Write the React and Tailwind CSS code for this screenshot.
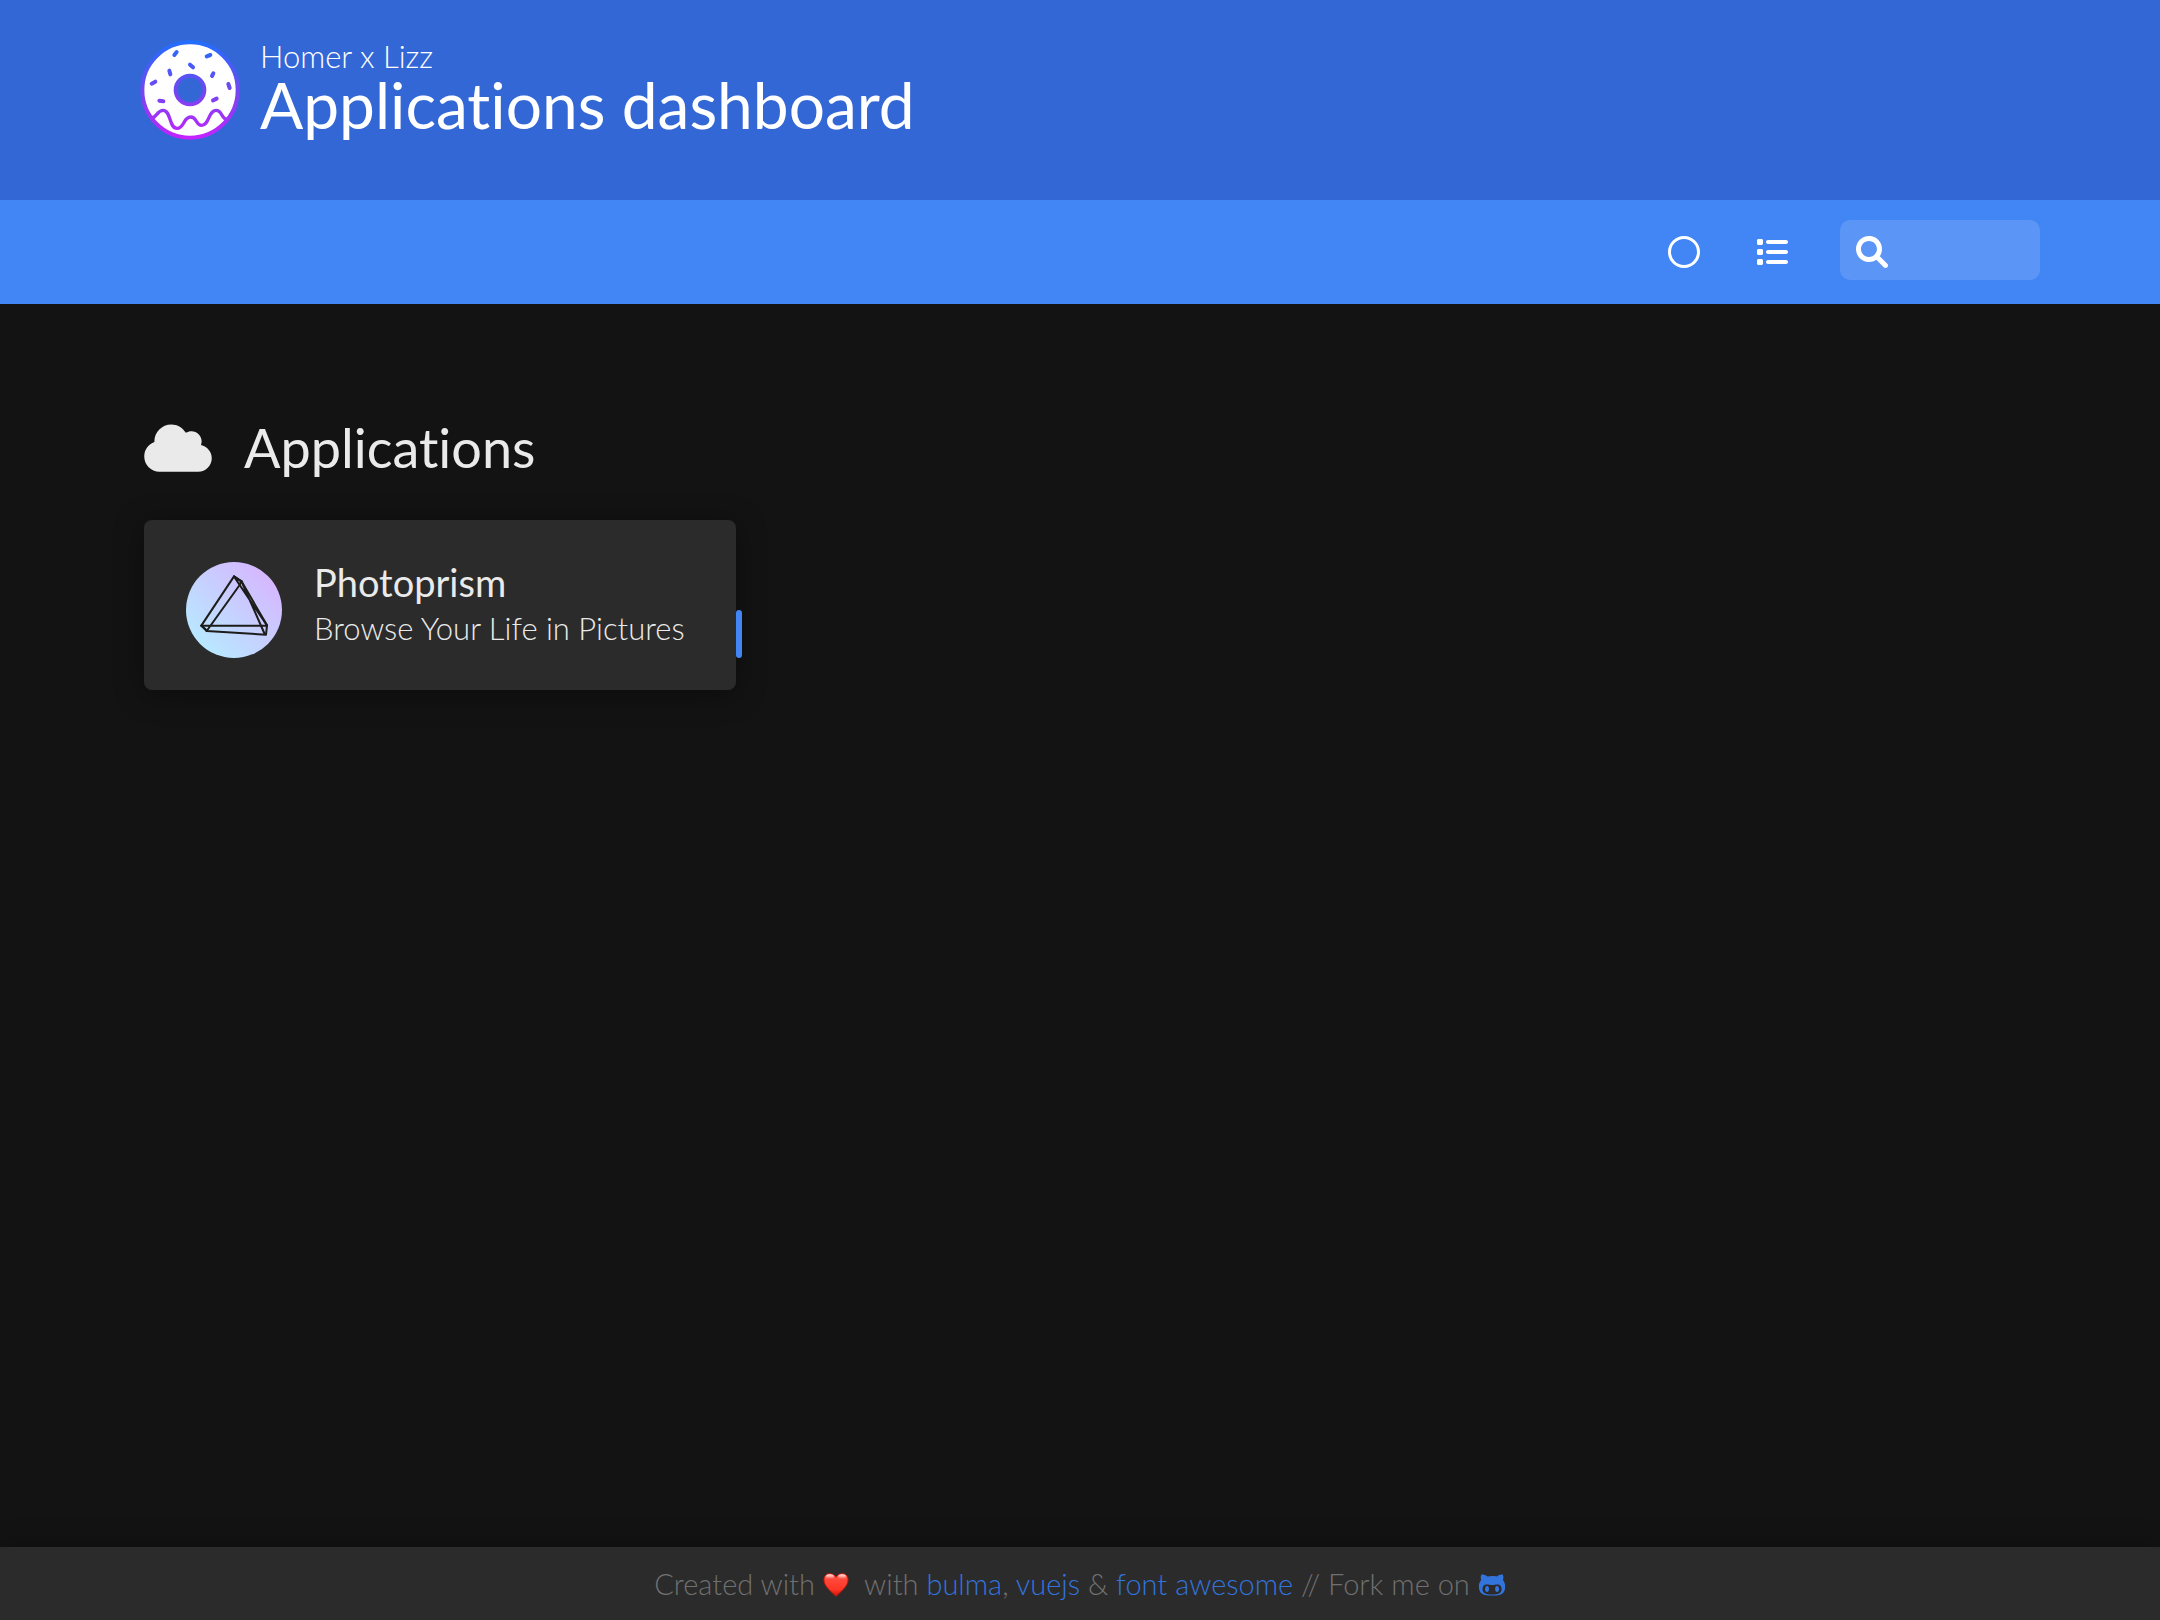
import { useState } from "react";
import { FaCloud, FaGithubAlt, FaList, FaRegCircle } from "react-icons/fa6";

const apps = [
  {
    name: "Photoprism",
    subtitle: "Browse Your Life in Pictures",
    url: "#photoprism",
  },
];

const Donut = () => (
  <svg viewBox="30 30 300 300" className="size-[100px] shrink-0" aria-hidden="true">
    <defs>
      <linearGradient id="donut" gradientUnits="userSpaceOnUse" x1="180" y1="30" x2="180" y2="330">
        <stop offset="0" stopColor="#1f6fff" />
        <stop offset="0.5" stopColor="#6f48f0" />
        <stop offset="1" stopColor="#c722ff" />
      </linearGradient>
    </defs>
    <path
      fill="#fff"
      fillRule="evenodd"
      d="M180 36a144 144 0 1 0 0 288a144 144 0 1 0 0-288zM180 138a42 42 0 1 1 0 84a42 42 0 1 1 0-84z"
    />
    <g fill="none" stroke="url(#donut)" strokeLinecap="round">
      <circle cx="180" cy="180" r="143" strokeWidth="12" />
      <circle cx="180" cy="180" r="43" strokeWidth="12" />
      <path
        strokeWidth="10"
        d="M66 264C80 262 82 241 99 241C124 241 116 295 141 295C164 295 159 261 182 261C202 261 196 286 215 286C238 286 235 241 258 241C278 241 273 268 292 268"
      />
      <path
        strokeWidth="12"
        d="M133 75l7-9M230 79l11-4M180 104l9 8M118 122l3 11M65 161l11-6M88 212l12 2M246 138l4-8M295 162l4 12M249 211l11-5"
      />
    </g>
  </svg>
);

const Prism = () => (
  <svg viewBox="48 51 288 288" className="size-24 shrink-0" aria-hidden="true">
    <defs>
      <linearGradient id="prism" gradientUnits="userSpaceOnUse" x1="90" y1="297" x2="290" y2="93">
        <stop offset="0" stopColor="#b8e8ff" />
        <stop offset="1" stopColor="#d5b8ff" />
      </linearGradient>
    </defs>
    <circle cx="192" cy="195" r="144" fill="url(#prism)" />
    <g fill="none" stroke="#1c1c1a" strokeWidth="6" strokeLinejoin="round" strokeLinecap="round">
      <path d="M192 94L94 242L110 258L288 269L291 241L214 108Z" />
      <path d="M94 242H291M192 94L209 120L110 258M209 120L214 108M192 94L214 110" />
      <path d="M209 120L291 241M214 108L284 267M94 242l16 14" />
    </g>
  </svg>
);

const SearchIcon = () => (
  <svg viewBox="0 0 512 512" fill="currentColor" className="size-8 shrink-0" aria-hidden="true">
    <path d="M500.3 443.7l-119.7-119.7c27.22-40.41 40.65-90.9 33.46-144.7C401.8 87.79 326.8 13.32 235.2 1.723C99.01-15.51-15.51 99.01 1.724 235.2c11.6 91.64 86.08 166.7 177.6 178.9c53.8 7.189 104.3-6.236 144.7-33.46l119.7 119.7c15.62 15.62 40.95 15.62 56.57 0C515.9 484.7 515.9 459.3 500.3 443.7zM79.1 208c0-70.58 57.42-128 128-128s128 57.42 128 128c0 70.58-57.42 128-128 128S79.1 278.6 79.1 208z" />
  </svg>
);

const Heart = () => (
  <svg viewBox="0 0 78 74" className="inline-block h-6 w-[26px] align-[-2px]" role="img" aria-label="love">
    <defs>
      <linearGradient id="heart" x1="0" y1="0" x2="0" y2="1">
        <stop offset="0" stopColor="#ff6a5c" />
        <stop offset="0.3" stopColor="#ff4638" />
        <stop offset="0.7" stopColor="#ff3626" />
        <stop offset="1" stopColor="#c81006" />
      </linearGradient>
      <linearGradient id="shine" x1="0" y1="0" x2="0" y2="1">
        <stop offset="0" stopColor="#fff" stopOpacity="0.85" />
        <stop offset="1" stopColor="#fff" stopOpacity="0" />
      </linearGradient>
    </defs>
    <path
      fill="url(#heart)"
      stroke="#d4180c"
      strokeWidth="3"
      d="M39 72C28 60 2 42 2 21C2 9 10 2 20 2C29 2 36 7 39 14C42 7 49 2 58 2C68 2 76 9 76 21C76 42 50 60 39 72Z"
    />
    <ellipse cx="20" cy="11" rx="12" ry="7" fill="url(#shine)" />
    <ellipse cx="58" cy="11" rx="12" ry="7" fill="url(#shine)" />
  </svg>
);

const App = () => {
  const [dark, setDark] = useState(true);
  const [list, setList] = useState(false);
  const [search, setSearch] = useState("");

  const visible = apps.filter((app) =>
    app.name.toLowerCase().includes(search.toLowerCase())
  );

  return (
    <div
      className={`flex min-h-screen flex-col font-['Lato',sans-serif] font-light [font-variant-ligatures:none] ${
        dark ? "bg-[#131313] text-[#eaeaea]" : "bg-[#f5f5f5] text-[#363636]"
      }`}
    >
      <header className="text-white">
        <div className="bg-[#3367d6] px-[140px] pt-10 pb-[60px]">
          <div className="flex h-[100px] items-start gap-5">
            <Donut />
            <div>
              <p className="text-[31px] leading-8">Homer x Lizz</p>
              <h1 className="text-[64px] leading-[66px] font-normal">
                Applications dashboard
              </h1>
            </div>
          </div>
        </div>
        <nav className="flex items-start justify-end bg-[#4285f4] px-[120px] pt-5 pb-6">
          <button
            type="button"
            aria-label="Toggle theme"
            className="flex h-[60px] w-[88px] items-center justify-center pt-1"
            onClick={() => setDark(!dark)}
          >
            <FaRegCircle size={32} />
          </button>
          <button
            type="button"
            aria-label="Toggle layout"
            className="mr-6 flex h-[60px] w-[88px] items-center justify-center pt-1"
            onClick={() => setList(!list)}
          >
            <FaList size={32} />
          </button>
          <label className="flex h-[60px] w-[200px] items-center gap-4 rounded-[10px] bg-white/13 px-4 pt-1">
            <SearchIcon />
            <input
              type="text"
              aria-label="Search"
              className="w-full min-w-0 bg-transparent text-[28px] outline-none"
              value={search}
              onChange={(e) => setSearch(e.target.value)}
            />
          </label>
        </nav>
      </header>

      <main className="grow px-36 pt-28">
        <h2 className="flex items-center gap-8 text-[54px] leading-16 font-normal">
          <FaCloud className="h-[54px] w-[68px]" />
          Applications
        </h2>
        <div className={`mt-10 grid gap-12 ${list ? "grid-cols-1" : "grid-cols-3"}`}>
          {visible.map((app) => (
            <a
              key={app.name}
              href={app.url}
              className={`relative flex gap-8 rounded-lg px-[42px] pt-[42px] pb-8 shadow-[0_4px_30px_rgba(0,0,0,0.4)] ${
                dark ? "bg-[#2b2b2b]" : "bg-white"
              }`}
            >
              <Prism />
              <div>
                <p className="text-[38px] leading-10 font-normal">{app.name}</p>
                <p className="mt-1 text-[31px] leading-11">{app.subtitle}</p>
              </div>
              <span className="absolute bottom-8 left-full h-12 w-[6px] rounded-[3px] bg-[#4285f4]"></span>
            </a>
          ))}
        </div>
      </main>

      <footer
        className={`py-4 text-center text-[29px] leading-[41px] text-[#707070] shadow-[0_4px_30px_rgba(0,0,0,0.4)] ${
          dark ? "bg-[#2b2b2b]" : "bg-white"
        }`}
      >
        <p>
          Created with <Heart /> &nbsp;with{" "}
          <a href="#bulma" className="text-[#3273dc]">bulma</a>,{" "}
          <a href="#vuejs" className="text-[#3273dc]">vuejs</a> &amp;{" "}
          <a href="#fontawesome" className="text-[#3273dc]">font awesome</a> // Fork me on{" "}
          <a href="#github" aria-label="GitHub" className="text-[#3273dc]">
            <FaGithubAlt className="inline-block size-7 align-[-4px]" />
          </a>
        </p>
      </footer>
    </div>
  );
};

export default App;
